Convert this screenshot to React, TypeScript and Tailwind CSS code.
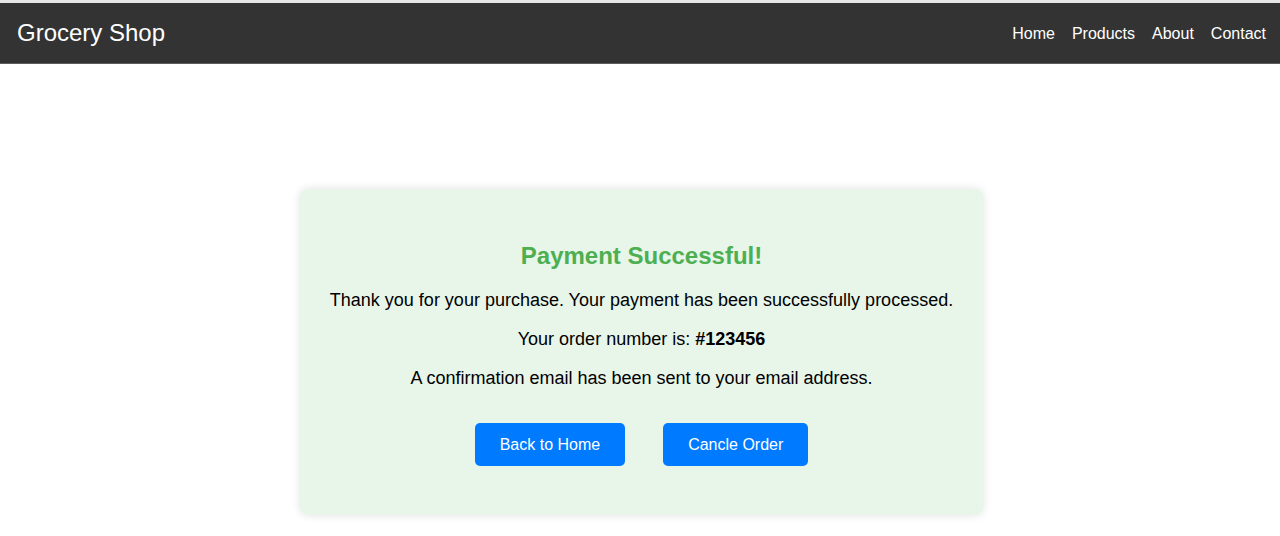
export default function App() {
  const links = ["Home", "Products", "About", "Contact"];

  return (
    <div className="min-h-[536px] bg-white font-['Liberation_Sans',Arial,sans-serif] text-black">
      <div className="h-[3px] bg-[#e6e6e6]" />
      {/* Top navigation */}
      <header className="flex h-[61px] items-center justify-between border-b border-[#5c5c5c] bg-[#333333] pl-[17px] pr-[14px] text-white">
        <h1 className="text-[24px] leading-[28px]">Grocery Shop</h1>
        <nav className="flex gap-[17px] text-[16px] leading-[19px]">
          {links.map((l) => (
            <a key={l} href="#" className="text-white">
              {l}
            </a>
          ))}
        </nav>
      </header>

      <main className="flex justify-center pl-[3px] pt-[125px]">
        <div className="w-[683px] rounded-lg bg-[#e8f5e9] pt-[53px] pb-[49px] text-center shadow-[0_0_10px_rgba(0,0,0,0.12)]">
          <h2 className="text-[24px] font-bold leading-[28px] text-[#4caf50]">Payment Successful!</h2>
          <p className="mt-5 text-[18px] leading-[21px]">
            Thank you for your purchase. Your payment has been successfully processed.
          </p>
          <p className="mt-[18px] text-[18px] leading-[21px]">
            Your order number is: <strong className="font-bold">#123456</strong>
          </p>
          <p className="mt-[18px] text-[18px] leading-[21px]">
            A confirmation email has been sent to your email address.
          </p>
          <div className="mt-[34px] flex justify-center gap-[38px]">
            <button className="rounded-[5px] bg-[#007bff] px-[25px] py-3 text-[16px] leading-[19px] text-white">
              Back to Home
            </button>
            <button className="rounded-[5px] bg-[#007bff] px-[25px] py-3 text-[16px] leading-[19px] text-white">
              Cancle Order
            </button>
          </div>
        </div>
      </main>
    </div>
  );
}
